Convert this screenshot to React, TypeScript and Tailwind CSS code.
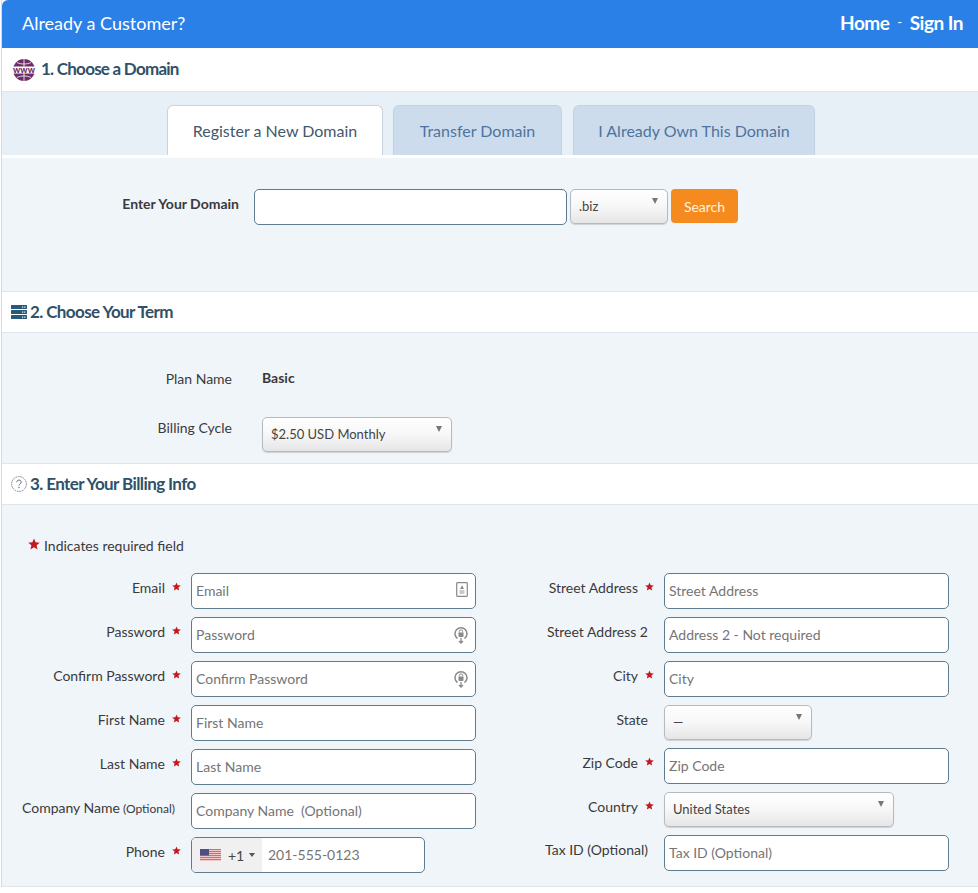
import React from "react";

// small red star used beside required fields
const Star = ({ size = 9 }: { size?: number }) => (
  <svg width={size} height={size} viewBox="0 0 24 24" className="shrink-0">
    <path d="M12 1l3.2 7.6 8.3.7-6.3 5.4 1.9 8.1L12 18.5l-7.1 4.3 1.9-8.1L.5 9.3l8.3-.7z" fill="#c4181f" />
  </svg>
);

const WwwIcon = () => (
  <svg width="24" height="24" viewBox="0 0 24 24" className="shrink-0">
    <circle cx="12" cy="12" r="11" fill="#6d2e68" />
    <path d="M12 1v22M5 4.5c4 2 10 2 14 0M5 19.5c4-2 10-2 14 0" stroke="#fff" strokeWidth="0.8" fill="none" />
    <rect x="0" y="8.5" width="24" height="7" fill="#fff" />
    <text x="12" y="15" textAnchor="middle" fontSize="9" fontWeight="900" fill="#6d2e68" className="font-['Lato',sans-serif]">www</text>
  </svg>
);

const ServerIcon = () => (
  <svg width="16" height="14" viewBox="0 0 16 14" className="shrink-0">
    {[0, 5, 10].map((y) => (
      <g key={y}>
        <rect x="0" y={y} width="16" height="4" rx="0.5" fill="#265a78" />
        <rect x="11" y={y + 1.5} width="1.2" height="1.2" fill="#fff" />
        <rect x="13.2" y={y + 1.5} width="1.2" height="1.2" fill="#fff" />
      </g>
    ))}
  </svg>
);

const HelpIcon = () => (
  <svg width="16" height="16" viewBox="0 0 16 16" className="shrink-0">
    <circle cx="8" cy="8" r="7.4" fill="none" stroke="#5d6a72" strokeWidth="0.8" strokeDasharray="1.6 0.8" />
    <path d="M5.8 6.2c0-1.3 1-2.1 2.2-2.1s2.2.8 2.2 2c0 1.7-2.2 1.7-2.2 3.4" fill="none" stroke="#5d6a72" strokeWidth="1" />
    <circle cx="8" cy="11.5" r="0.7" fill="#5d6a72" />
  </svg>
);

const ContactIcon = () => (
  <svg width="12" height="15" viewBox="0 0 12 15">
    <rect x="0.7" y="0.7" width="10.6" height="13.6" rx="0.8" fill="none" stroke="#8a8a8a" strokeWidth="1.2" />
    <path d="M6 3.2L8 7H4z" fill="#8a8a8a" />
    <rect x="3.5" y="8.4" width="5" height="1.2" fill="#a8a8a8" />
    <rect x="3.5" y="10.4" width="5" height="1.2" fill="#a8a8a8" />
  </svg>
);

const KeyIcon = () => (
  <svg width="14" height="18" viewBox="0 0 14 18">
    <path d="M3.5 12.6A6 6 0 1 1 10.5 12.6" fill="none" stroke="#8a8a8a" strokeWidth="1.5" />
    <rect x="4.5" y="6.5" width="5" height="4.5" rx="0.8" fill="#8a8a8a" />
    <path d="M5.3 6.7V5.6a1.7 1.7 0 0 1 3.4 0v1.1" fill="none" stroke="#8a8a8a" strokeWidth="1" />
    <path d="M7 12v5M5 15l2 2 2-2" fill="none" stroke="#8a8a8a" strokeWidth="1.3" />
  </svg>
);

const Flag = () => (
  <svg width="21" height="12" viewBox="0 0 21 12" className="shrink-0">
    <rect width="21" height="12" fill="#f3d3d3" />
    {[0, 2, 4, 6, 8, 10].map((y) => (
      <rect key={y} y={y} width="21" height="1.1" fill="#d66a6e" />
    ))}
    <rect width="9" height="6.4" fill="#4d4f88" />
  </svg>
);

const SectionHead = ({ icon, title }: { icon: React.ReactNode; title: string }) => (
  <div className="flex items-center h-[41px] shrink-0 pl-[9px] gap-[3px] bg-white border-b border-[#dfe5ea]">
    {icon}
    <h2 className="text-[17px] font-bold tracking-[-0.6px] text-[#2f5169]">{title}</h2>
  </div>
);

const selectClass =
  "relative flex items-center h-[35px] pl-2 rounded-[5px] border border-[#b4bac0] text-[13px] text-[#444] bg-gradient-to-b from-white via-[#f7f7f7] to-[#e6e6e6] shadow-[0_1px_1px_rgba(0,0,0,0.15)]";

const Select = ({ value, width }: { value: string; width: string }) => (
  <div className={`${selectClass} ${width}`}>
    <span>{value}</span>
    <span className="absolute top-[8px] right-[9px] w-0 h-0 border-x-[3.5px] border-x-transparent border-t-[6px] border-t-[#777]" />
  </div>
);

const Input = ({ placeholder, icon, width = "w-[285px]" }: { placeholder?: string; icon?: React.ReactNode; width?: string }) => (
  <div className={`relative h-[36px] ${width}`}>
    <input
      placeholder={placeholder}
      className="w-full h-full pl-1 pb-px rounded-[5px] bg-white border border-[#5f7c8f] text-[14px] placeholder:text-[#757575] outline-none"
    />
    {icon && <span className="absolute right-[8px] top-[9px] flex">{icon}</span>}
  </div>
);

// one form line: right aligned label, star slot, then the control
const Row = ({ label, small, req, labelW, children }: {
  label: string; small?: string; req?: boolean; labelW: string; children: React.ReactNode;
}) => (
  <div className="flex items-start mb-[8px]">
    <div className={`flex justify-end items-center h-[29px] shrink-0 text-[14px] text-[#3a3a3a] whitespace-nowrap ${labelW}`}>
      <span>
        {label}
        {small && <span className="text-[12px]"> {small}</span>}
      </span>
    </div>
    <div className="w-[26px] h-[26px] shrink-0 pr-[3px] flex items-center justify-center">{req && <Star />}</div>
    {children}
  </div>
);

export default function App() {
  return (
    <div className="w-[978px] h-[893px] overflow-hidden bg-white font-['Lato',sans-serif]">
      <div className="ml-px border-l border-[#d5dadf] h-[887px] flex flex-col">
        <header className="flex items-center justify-between h-[48px] pl-[20px] pr-[15px] pb-[2px] bg-[#2b80e8] rounded-tl-[6px] text-white shrink-0">
          <span className="text-[18px]">Already a Customer?</span>
          <span className="flex items-center text-[19px] font-bold tracking-[-0.5px]">
            Home<span className="font-normal text-[13px] mx-[8px]">-</span>Sign In
          </span>
        </header>

        <div className="flex items-center h-[44px] pl-[10px] gap-[5px] bg-white border-b border-[#dfe5ea] shrink-0">
          <WwwIcon />
          <h2 className="text-[17px] font-bold tracking-[-0.75px] text-[#2f5169] pb-px">1. Choose a Domain</h2>
        </div>

        <div className="flex items-end h-[63px] pl-[165px] bg-[#e7f0f6] shrink-0 text-[16px]">
          <div className="flex items-center justify-center w-[216px] h-[50px] bg-white border border-b-0 border-[#c9d3de] rounded-t-[6px] text-[#44586a]">Register a New Domain</div>
          <div className="flex items-center justify-center w-[169px] h-[50px] ml-[10px] bg-[#cddced] border border-b-0 border-[#c2d2e4] rounded-t-[6px] text-[#4d749e]">Transfer Domain</div>
          <div className="flex items-center justify-center w-[242px] h-[50px] ml-[11px] bg-[#cddced] border border-b-0 border-[#c2d2e4] rounded-t-[6px] text-[#4d749e]">I Already Own This Domain</div>
        </div>

        <div className="h-[134px] shrink-0 mt-[3px] pt-[31px] bg-[#f0f5fa] border-b border-[#dfe5ea] flex items-start">
          <div className="w-[237px] h-[28px] flex items-center justify-end text-[14px] font-bold text-[#3a3a3a]">Enter Your Domain</div>
          <div className="ml-[15px]">
            <Input width="w-[313px]" />
          </div>
          <div className="ml-[3px]">
            <Select value=".biz" width="w-[98px]" />
          </div>
          <button className="ml-[3px] w-[67px] h-[34px] rounded-[4px] bg-[#f58a1f] text-[#fff4dc] text-[14px]">Search</button>
        </div>

        <SectionHead icon={<ServerIcon />} title="2. Choose Your Term" />

        <div className="h-[131px] shrink-0 bg-[#f0f5fa] border-b border-[#dfe5ea] pt-[30px]">
          <div className="flex items-center h-[30px]">
            <div className="w-[230px] text-right text-[14px] text-[#3a3a3a]">Plan Name</div>
            <div className="ml-[30px] text-[14px] font-bold text-[#3a3a3a] pb-[2px]">Basic</div>
          </div>
          <div className="flex items-start mt-[24px]">
            <div className="w-[230px] h-[20px] flex items-center justify-end text-[14px] text-[#3a3a3a]">Billing Cycle</div>
            <div className="ml-[30px]">
              <Select value="$2.50 USD Monthly" width="w-[190px]" />
            </div>
          </div>
        </div>

        <SectionHead icon={<HelpIcon />} title="3. Enter Your Billing Info" />

        <div className="flex-1 bg-[#f0f5fa] border-b border-[#dfe5ea]">
          <div className="flex items-start pl-[26px] pt-[29px] h-[68px] text-[14px] text-[#3a3a3a]">
            <span className="flex items-center h-[20px]"><Star size={12} /></span>
            <span className="ml-[4px] pt-px">Indicates required field</span>
          </div>
          <div className="flex">
            <div className="w-[545px] shrink-0">
              <Row label="Email" req labelW="w-[163px]"><Input placeholder="Email" icon={<ContactIcon />} /></Row>
              <Row label="Password" req labelW="w-[163px]"><Input placeholder="Password" icon={<KeyIcon />} /></Row>
              <Row label="Confirm Password" req labelW="w-[163px]"><Input placeholder="Confirm Password" icon={<KeyIcon />} /></Row>
              <Row label="First Name" req labelW="w-[163px]"><Input placeholder="First Name" /></Row>
              <Row label="Last Name" req labelW="w-[163px]"><Input placeholder="Last Name" /></Row>
              <Row label="Company Name" small="(Optional)" labelW="w-[173px]"><div className="-ml-[10px]"><Input placeholder="Company Name  (Optional)" /></div></Row>
              <Row label="Phone" req labelW="w-[163px]">
                <div className="flex w-[234px] h-[36px] rounded-[5px] border border-[#5f7c8f] bg-white overflow-hidden">
                  <div className="flex items-center w-[70px] pl-[8px] bg-[#f0f0f0] text-[14px] text-[#444]">
                    <Flag />
                    <span className="ml-[7px]">+1</span>
                    <span className="ml-[5px] w-0 h-0 border-x-[3px] border-x-transparent border-t-[4px] border-t-[#555]" />
                  </div>
                  <input placeholder="201-555-0123" className="flex-1 min-w-0 pl-[6px] pb-px text-[14px] placeholder:text-[#757575] outline-none" />
                </div>
              </Row>
            </div>
            <div>
              <Row label="Street Address" req labelW="w-[91px]"><Input placeholder="Street Address" /></Row>
              <Row label="Street Address 2" labelW="w-[101px]"><div className="-ml-[10px]"><Input placeholder="Address 2 - Not required" /></div></Row>
              <Row label="City" req labelW="w-[91px]"><Input placeholder="City" /></Row>
              <Row label="State" labelW="w-[101px]"><div className="-ml-[10px]"><Select value="—" width="w-[148px]" /></div></Row>
              <Row label="Zip Code" req labelW="w-[91px]"><Input placeholder="Zip Code" /></Row>
              <Row label="Country" req labelW="w-[91px]"><Select value="United States" width="w-[230px]" /></Row>
              <Row label="Tax ID (Optional)" labelW="w-[101px]"><div className="-ml-[10px]"><Input placeholder="Tax ID (Optional)" /></div></Row>
            </div>
          </div>
        </div>
      </div>
    </div>
  );
}
